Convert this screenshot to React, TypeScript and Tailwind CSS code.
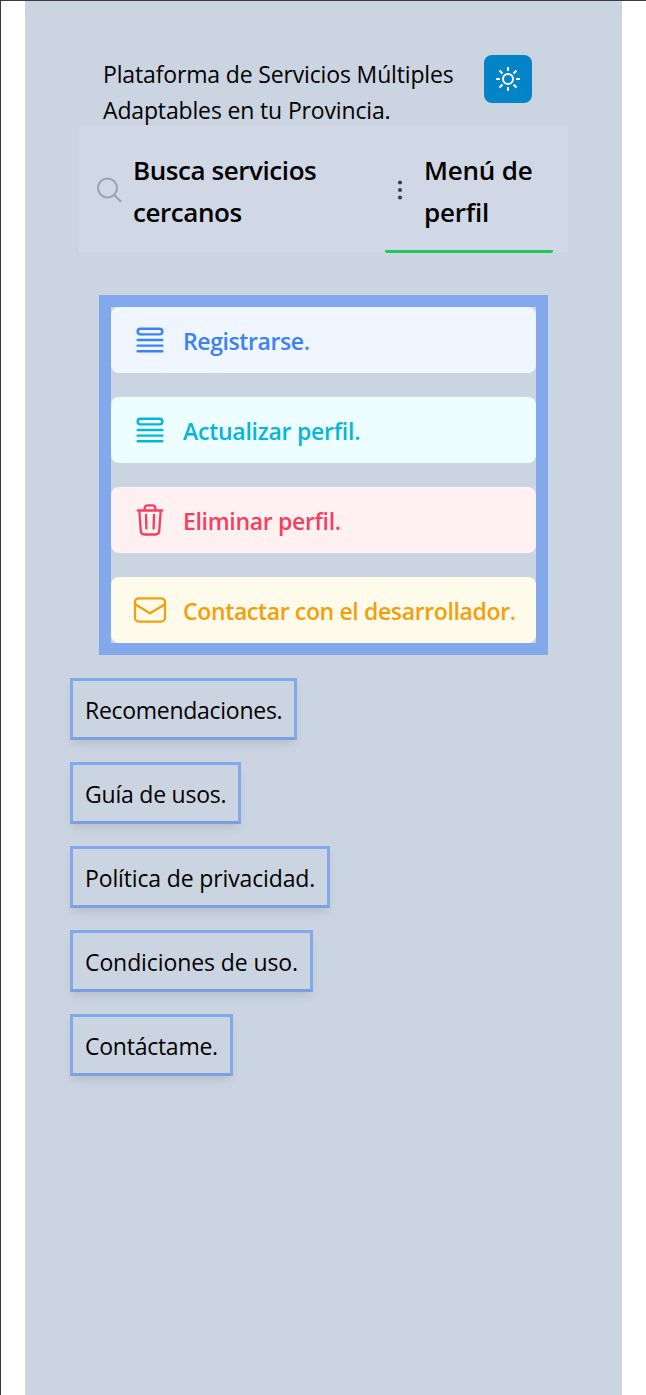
import type { ReactNode } from "react";

const QueueIcon = () => (
  <svg className="size-9" viewBox="0 0 24 24" fill="none" stroke="currentColor" strokeWidth="1.6" strokeLinecap="round" strokeLinejoin="round">
    <path d="M3.75 12h16.5m-16.5 3.75h16.5M3.75 19.5h16.5M5.625 4.5h12.75a1.875 1.875 0 0 1 0 3.75H5.625a1.875 1.875 0 0 1 0-3.75Z" />
  </svg>
);

const TrashIcon = () => (
  <svg className="size-9" viewBox="0 0 36 36" fill="none" stroke="currentColor" strokeWidth="2.3" strokeLinecap="round" strokeLinejoin="round">
    <path d="M5.8 8.5h24.400M7.300 8.500l1.500 20.700c.2 2.300 1.500 3.300 3.700 3.300h11c2.200 0 3.500-1 3.700-3.300l1.500-20.700M12.600 8.500V6.500c0-2 1.200-3.200 3.200-3.200h4.400c2 0 3.200 1.200 3.200 3.200v2M14 13l.4 13.500M22 13l-.4 13.500" />
  </svg>
);

const MailIcon = () => (
  <svg className="size-9" viewBox="0 0 36 36" fill="none" stroke="currentColor" strokeWidth="2.250" strokeLinecap="round" strokeLinejoin="round">
    <rect x="3" y="6.300" width="30" height="23.300" rx="3.800" />
    <path d="m3.500 12.500 14.500 8.800 14.500-8.800" />
  </svg>
);

type Action = { label: string; style: string; icon: ReactNode; text: string };

const actions: Action[] = [
  { label: "Registrarse.", style: "bg-[#eff6ff] text-[#3b82f6]", icon: <QueueIcon />, text: "tracking-[-0.4px]" },
  { label: "Actualizar perfil.", style: "bg-[#ecfeff] text-[#06b6d4]", icon: <QueueIcon />, text: "tracking-[-0.250px]" },
  { label: "Eliminar perfil.", style: "bg-[#fff1f2] text-[#f43f5e]", icon: <TrashIcon />, text: "tracking-[-0.320px]" },
  { label: "Contactar con el desarrollador.", style: "bg-[#fffbeb] text-[#f59e0b]", icon: <MailIcon />, text: "tracking-[-0.360px]" },
];

const links = [
  { label: "Recomendaciones.", size: "w-[227px] tracking-[-0.280px]" },
  { label: "Guía de usos.", size: "w-[171px] tracking-[-0.220px]" },
  { label: "Política de privacidad.", size: "w-[260px] tracking-[-0.140px]" },
  { label: "Condiciones de uso.", size: "w-[243px] tracking-[-0.100px]" },
  { label: "Contáctame.", size: "w-[163px] tracking-[-0.250px]" },
];

export default function App() {
  return (
    <div className="h-[1395px] w-[646px] overflow-hidden border-t border-l border-[#3c383d] bg-white pl-6 font-['Open_Sans',sans-serif] text-black">
      <main className="h-full w-[597px] bg-[#cbd5e1]">
        <header className="flex h-[125px] pt-[54px] pl-[78px]">
          <p className="w-[381px] pt-[1px] text-[23px] leading-9 tracking-[-0.150px] whitespace-nowrap">
            Plataforma de Servicios Múltiples<br />Adaptables en tu Provincia.
          </p>
          <button className="flex size-12 items-center justify-center rounded-lg bg-[#0284c7] text-white" aria-label="Tema">
            <svg className="size-6" viewBox="0 0 24 24" fill="none" stroke="currentColor" strokeWidth="2">
              <circle cx="12" cy="12" r="5" />
              <path d="M12 0v4M12 20v4M0 12h4M20 12h4M3.500 3.500l3 3M17.500 17.500l3 3M20.500 3.500l-3 3M6.500 17.500l-3 3" />
            </svg>
          </button>
        </header>
        <nav className="ml-[54px] flex h-[127px] w-[489px] bg-[#d0d8e5] text-[26px] leading-[42px] font-semibold">
          <div className="flex w-[306px] items-center pt-[2px] pl-[17px]">
            <svg className="size-[27px] text-[#9ca3af]" viewBox="0 0 27 27" fill="none" stroke="currentColor" strokeWidth="2" strokeLinecap="round">
              <circle cx="11.500" cy="11" r="9.500" />
              <path d="m18.200 18 6.300 6.300" />
            </svg>
            <span className="ml-[10px] tracking-[-0.430px] whitespace-nowrap">Busca servicios<br />cercanos</span>
          </div>
          <div className="flex w-[168px] items-center rounded-b-[2px] border-b-3 border-[#22c55e] pt-[3px] pl-[12px]">
            <svg className="h-6 w-[6px] text-[#374151]" viewBox="0 0 6 24" fill="currentColor">
              <circle cx="3" cy="4.500" r="2.100" /><circle cx="3" cy="12" r="2.100" /><circle cx="3" cy="19.500" r="2.100" />
            </svg>
            <span className="ml-[21px] pt-[2px] tracking-[-0.200px] whitespace-nowrap">Menú de<br />perfil</span>
          </div>
        </nav>
        <section className="mt-[42px] ml-[74px] flex h-[360px] w-[449px] flex-col gap-6 border-12 border-[#83a9ec]">
          {actions.map((a) => (
            <a key={a.label} className={`flex h-[66px] items-center rounded-lg pl-[21px] text-[23px] leading-9 font-semibold ${a.style}`}>
              {a.icon}
              <span className={`ml-[15px] pt-[2px] whitespace-nowrap ${a.text}`}>{a.label}</span>
            </a>
          ))}
        </section>
        <footer className="mt-[23px] ml-[45px] flex flex-col items-start gap-[22px]">
          {links.map((l) => (
            <a key={l.label} className={`flex h-[62px] items-center border-3 border-[#83a9ec] border-b-[#7c9fde] pt-[2px] pl-3 text-[23px] leading-9 whitespace-nowrap shadow-[0_6px_9px_-2px_rgba(0,0,0,0.1)] ${l.size}`}>
              {l.label}
            </a>
          ))}
        </footer>
      </main>
    </div>
  );
}
